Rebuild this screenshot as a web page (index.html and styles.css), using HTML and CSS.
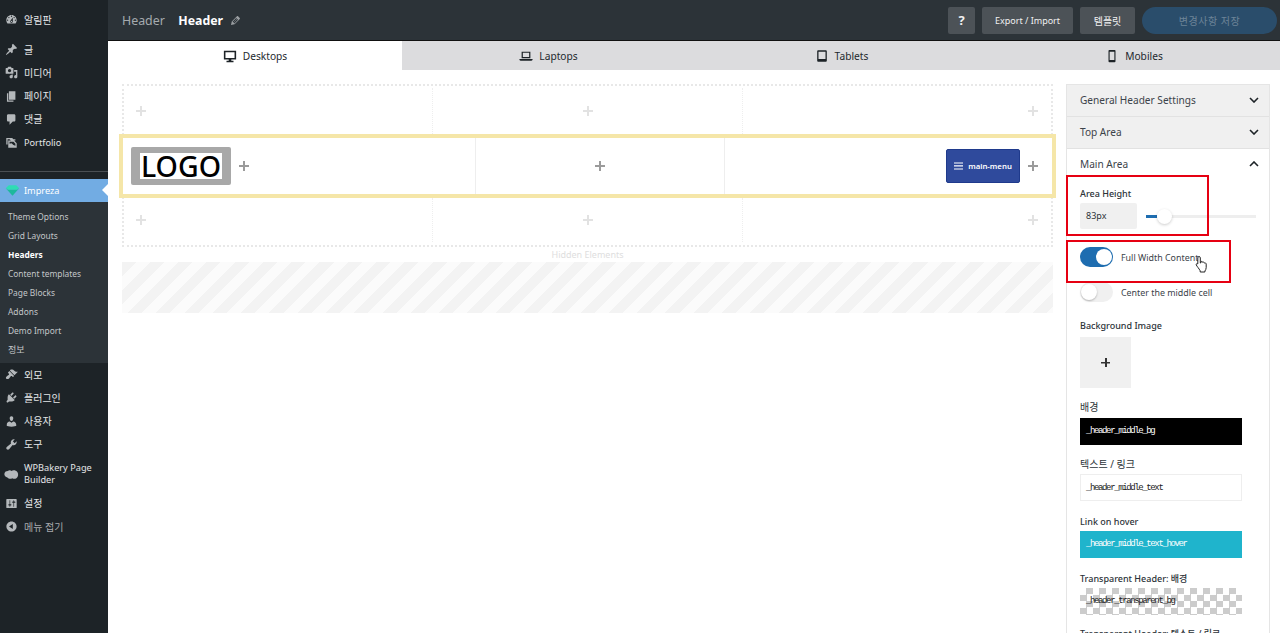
FILE: index.html
```html
<!DOCTYPE html>
<html lang="ko">
<head>
<meta charset="utf-8">
<title>Header</title>
<link rel="stylesheet" href="styles.css">
</head>
<body>
<div class="app">
  <nav class="side">
    <a class="item first"><svg class="ic" viewBox="0 0 20 20"><path d="M3.76 16h12.48c1.1-1.37 1.76-3.11 1.76-5 0-4.42-3.58-8-8-8s-8 3.58-8 8c0 1.89.66 3.63 1.76 5zM10 4c.55 0 1 .45 1 1s-.45 1-1 1-1-.45-1-1 .45-1 1-1zM6 6c.55 0 1 .45 1 1s-.45 1-1 1-1-.45-1-1 .45-1 1-1zm8 0c.55 0 1 .45 1 1s-.45 1-1 1-1-.45-1-1 .45-1 1-1zm-5.37 5.55L12 7v6c0 1.1-.9 2-2 2s-2-.9-2-2c0-.57.24-1.08.63-1.45zM4 10c.55 0 1 .45 1 1s-.45 1-1 1-1-.45-1-1 .45-1 1-1zm12 0c.55 0 1 .45 1 1s-.45 1-1 1-1-.45-1-1 .45-1 1-1zm-5 3c0-.55-.45-1-1-1s-1 .45-1 1 .45 1 1 1 1-.45 1-1z"/></svg>알림판</a>
    <div class="gap"></div>
    <a class="item"><svg class="ic" viewBox="0 0 20 20"><path d="M10.44 3.02l1.82-1.82 6.36 6.35-1.83 1.82c-1.05-.68-2.48-.57-3.41.36l-.75.75c-.92.93-1.04 2.35-.35 3.41l-1.83 1.82-2.41-2.41-2.8 2.79c-.42.42-3.38 2.71-3.8 2.29s1.86-3.39 2.28-3.81l2.79-2.79L4.1 9.36l1.83-1.82c1.05.69 2.48.57 3.4-.36l.75-.75c.93-.92 1.05-2.35.36-3.41z"/></svg>글</a>
    <a class="item"><svg class="ic" viewBox="0 0 20 20"><path d="M13 11V4c0-.55-.45-1-1-1h-1.67L9 1H5L3.67 3H2c-.55 0-1 .45-1 1v7c0 .55.45 1 1 1h10c.55 0 1-.45 1-1zM7 4.5c1.38 0 2.5 1.12 2.5 2.5S8.38 9.5 7 9.5 4.5 8.38 4.5 7 5.62 4.5 7 4.5zM14 6h5v10.5c0 1.38-1.12 2.5-2.5 2.5S14 17.88 14 16.5s1.12-2.5 2.5-2.5c.17 0 .34.02.5.05V9h-3V6zm-4 8.05V13h2v3.5c0 1.38-1.12 2.5-2.5 2.5S7 17.88 7 16.5 8.12 14 9.5 14c.17 0 .34.02.5.05z"/></svg>미디어</a>
    <a class="item"><svg class="ic" viewBox="0 0 20 20"><path d="M6 15V2h10v13H6zm-1 1h8v2H3V5h2v11z"/></svg>페이지</a>
    <a class="item"><svg class="ic" viewBox="0 0 20 20"><path d="M5 2h9c1.1 0 2 .9 2 2v7c0 1.1-.9 2-2 2h-2l-5 5v-5H5c-1.1 0-2-.9-2-2V4c0-1.1.9-2 2-2z"/></svg>댓글</a>
    <a class="item en"><svg class="ic" viewBox="0 0 20 20"><path d="M2 3h9l2 2h3v2H9L7 5H4v8H2zM5 7h9l4 4v7H5zm2 2v3l3-1 3 3 3 1v-3l-3-3z"/></svg>Portfolio</a>
    <div class="sep"></div>
    <a class="item active en"><svg class="gem" viewBox="0 0 20 16"><path class="gem-top" d="M1 5l4-4h10l4 4-3 2H4z"/><path class="gem-low" d="M1 5l3 2h12l3-2-9 10z"/></svg>Impreza</a>
    <div class="sub">
      <a>Theme Options</a>
      <a>Grid Layouts</a>
      <a class="cur">Headers</a>
      <a>Content templates</a>
      <a>Page Blocks</a>
      <a>Addons</a>
      <a>Demo Import</a>
      <a class="ko">정보</a>
    </div>
    <a class="item"><svg class="ic" viewBox="0 0 20 20"><path d="M14.48 11.06L7.41 3.99l1.5-1.5c.5-.56 2.3-.47 3.51.32 1.21.8 1.43 1.28 2.91 2.1 1.18.64 2.45 1.26 4.45.85zm-.71.71L6.7 4.7 4.93 6.47c-.39.39-.39 1.02 0 1.41l1.06 1.06c.39.39.39 1.03 0 1.42-.6.6-1.43 1.11-2.21 1.69-.35.26-.7.53-1.01.84C1.43 13.23.9 15.38 2.01 16.49c1.1 1.1 3.25.58 4.62-.78.31-.31.58-.66.84-1.01.58-.78 1.09-1.61 1.69-2.21.39-.39 1.03-.39 1.42 0l1.06 1.06c.39.39 1.02.39 1.41 0z"/></svg>외모</a>
    <a class="item"><svg class="ic" viewBox="0 0 20 20"><path d="M13.11 4.36L9.87 7.6 8 5.73l3.24-3.24c.35-.34 1.05-.2 1.56.32.52.51.66 1.21.31 1.55zm-8 1.77l.91-1.12 9.01 9.01-1.19.84c-.71.71-2.63 1.16-3.82 1.16H6.14L4.9 17.26c-.59.59-1.54.59-2.12 0-.59-.58-.59-1.53 0-2.12l1.24-1.24v-3.88c0-1.13.4-3.19 1.09-3.89zm7.26 3.97l3.24-3.24c.34-.35 1.04-.21 1.55.31.52.51.66 1.21.31 1.55l-3.24 3.25z"/></svg>플러그인</a>
    <a class="item"><svg class="ic" viewBox="0 0 20 20"><path d="M10 9.25c-2.27 0-2.73-3.44-2.73-3.44C7 4.02 7.82 2 9.97 2c2.16 0 2.98 2.02 2.71 3.81 0 0-.41 3.44-2.68 3.44zm0 2.57L12.72 10c2.39 0 4.52 2.33 4.52 4.53v2.49s-3.65 1.13-7.24 1.13c-3.65 0-7.24-1.13-7.24-1.13v-2.49c0-2.25 1.94-4.48 4.47-4.48z"/></svg>사용자</a>
    <a class="item"><svg class="ic" viewBox="0 0 20 20"><path d="M16.68 9.77c-1.34 1.34-3.3 1.67-4.95.99l-5.41 6.52c-.99.99-2.59.99-3.58 0s-.99-2.59 0-3.57l6.52-5.42c-.68-1.65-.35-3.61.99-4.95 1.28-1.28 3.12-1.62 4.72-1.06l-2.89 2.89 2.82 2.82 2.86-2.87c.53 1.58.18 3.39-1.08 4.65z"/></svg>도구</a>
    <a class="item tall en"><svg class="ic cloud" viewBox="0 0 20 20"><path d="M5 4c2-1.5 4-1 5 0 2-1.5 6-1 8 1.5 1.5 2.5 1 6.5-1.5 8-2 1.5-4 1-5.5 0-2 1.5-5 1-6.5-1C2.5 12 0 10 .5 7.5 1 5 3 4 5 4z"/></svg>WPBakery Page Builder</a>
    <a class="item"><svg class="ic" viewBox="0 0 20 20"><path d="M18 16V4c0-.55-.45-1-1-1H3c-.55 0-1 .45-1 1v12c0 .55.45 1 1 1h14c.55 0 1-.45 1-1zM8 11h1c.55 0 1 .45 1 1s-.45 1-1 1H8v1.5c0 .28-.22.5-.5.5s-.5-.22-.5-.5V13H6c-.55 0-1-.45-1-1s.45-1 1-1h1V5.5c0-.28.22-.5.5-.5s.5.22.5.5V11zm5-2h-1c-.55 0-1-.45-1-1s.45-1 1-1h1V5.5c0-.28.22-.5.5-.5s.5.22.5.5V7h1c.55 0 1 .45 1 1s-.45 1-1 1h-1v5.5c0 .28-.22.5-.5.5s-.5-.22-.5-.5V9z"/></svg>설정</a>
    <a class="item dim"><svg class="ic" viewBox="0 0 20 20"><path d="M10 2.16c4.33 0 7.84 3.51 7.84 7.84s-3.51 7.84-7.84 7.84S2.16 14.33 2.16 10 5.71 2.16 10 2.16zm2 11.72V6.12L6.18 9.97z"/></svg>메뉴 접기</a>
  </nav>

  <div class="main">
    <header class="top">
      <span class="crumb">Header</span>
      <span class="title">Header</span>
      <svg class="pencil" viewBox="0 0 20 20"><path d="M13.89 3.39l2.71 2.72c.46.46.42 1.24.03 1.64l-8.01 8.02-5.56 1.16 1.16-5.58 8.01-8c.4-.39 1.2-.43 1.66.04zM11.16 6.18l-5.59 5.61 1.11 1.11 5.54-5.65zm2.74 2.77L12.79 7.84l-5.6 5.61 1.11 1.11z"/></svg>
      <span class="spring"></span>
      <button class="btn help">?</button>
      <button class="btn export">Export / Import</button>
      <button class="btn tpl">템플릿</button>
      <button class="save">변경사항 저장</button>
    </header>

    <div class="tabs">
      <div class="tab on"><svg class="tic" viewBox="0 0 16 16"><path d="M1 2h14v10H9.5v1.5H12V15H4v-1.5h2.5V12H1zm1.8 1.8v6.4h10.4V3.8z"/></svg>Desktops</div>
      <div class="tab"><svg class="tic" viewBox="0 0 16 16"><path d="M3 3h10v7.5H3zm1.4 1.4v4.7h7.2V4.4zM.5 11.5h15v.5c0 .8-.6 1.3-1.3 1.3H1.8C1.1 13.3.5 12.8.5 12z"/></svg>Laptops</div>
      <div class="tab"><svg class="tic" viewBox="0 0 16 16"><path d="M3.5 1.5h9c.6 0 1 .4 1 1v11c0 .6-.4 1-1 1h-9c-.6 0-1-.4-1-1v-11c0-.6.4-1 1-1zM4 3v8.5h8V3z"/></svg>Tablets</div>
      <div class="tab"><svg class="tic" viewBox="0 0 16 16"><path d="M5 1h6c.6 0 1 .4 1 1v12c0 .6-.4 1-1 1H5c-.6 0-1-.4-1-1V2c0-.6.4-1 1-1zm.3 2v9.5h5.4V3z"/></svg>Mobiles</div>
    </div>

    <div class="work">
      <section class="canvas">
        <div class="rows">
          <div class="row outer high"><div class="cell"><i class="plus"></i></div><div class="cell mid"><i class="plus"></i></div><div class="cell end"><i class="plus"></i></div></div>
          <div class="row focus">
            <div class="cell"><div class="logo"><span>LOGO</span></div><i class="plus dark"></i></div>
            <div class="cell mid"><i class="plus dark"></i></div>
            <div class="cell end"><div class="menu"><svg class="burger" viewBox="0 0 10 8"><path d="M0 0h10v1.3H0zM0 3.3h10v1.3H0zM0 6.7h10V8H0z"/></svg>main-menu</div><i class="plus dark"></i></div>
          </div>
          <div class="row outer low"><div class="cell"><i class="plus"></i></div><div class="cell mid"><i class="plus"></i></div><div class="cell end"><i class="plus"></i></div></div>
        </div>
        <div class="hidden-label">Hidden Elements</div>
        <div class="stripes"></div>
      </section>

      <aside class="panel">
        <div class="acc"><span>General Header Settings</span><svg class="chev" viewBox="0 0 10 6"><path d="M1 1l4 4 4-4"/></svg></div>
        <div class="acc"><span>Top Area</span><svg class="chev" viewBox="0 0 10 6"><path d="M1 1l4 4 4-4"/></svg></div>
        <div class="acc open"><span>Main Area</span><svg class="chev" viewBox="0 0 10 6"><path d="M1 5l4-4 4 4"/></svg></div>
        <div class="body">
          <label class="lab first">Area Height</label>
          <div class="slide"><div class="val">83px</div><div class="track"><i class="fill"></i><i class="thumb"></i></div></div>
          <div class="sw on"><i class="knob"></i><span>Full Width Content</span></div>
          <div class="sw"><i class="knob"></i><span>Center the middle cell</span></div>
          <label class="lab bg">Background Image</label>
          <div class="upload"></div>
          <label class="lab ko">배경</label>
          <div class="color black">_header_middle_bg</div>
          <label class="lab ko">텍스트 / 링크</label>
          <div class="color white">_header_middle_text</div>
          <label class="lab drop">Link on hover</label>
          <div class="color teal">_header_middle_text_hover</div>
          <label class="lab drop">Transparent Header: 배경</label>
          <div class="color check">_header_transparent_bg</div>
          <label class="lab">Transparent Header: 텍스트 / 링크</label>
        </div>
      </aside>
    </div>
  </div>
</div>
<div class="mark m1"></div>
<div class="mark m2"></div>
<svg class="hand" viewBox="0 0 14 18"><path d="M4 1.5c.8 0 1.3.6 1.3 1.3V8l.7-.2V6.6c.9-.5 1.600 0 1.700.7.900-.5 1.700 0 1.800.8.900-.4 1.700.1 1.700 1v3.500c0 1.500-.7 2.500-1.300 3.400v1H5.200v-1.200C4 13.500 2 11.500 1.300 10c-.4-1 .5-1.800 1.400-1.200l.1.100V2.800c0-.7.500-1.300 1.200-1.300z"/></svg>
</body>
</html>
```

FILE: styles.css
```css
* { box-sizing: border-box; }
html, body { margin: 0; height: 633px; overflow: hidden; background: #fff; }
body { font-family: "Noto Sans", "Noto Sans CJK KR", sans-serif; color: #2c3338; }
.app { display: flex; height: 633px; }

.side { width: 108px; flex: none; background: #1d2327; padding-top: 8px; display: flex; flex-direction: column; }
.item { height: 23.2px; display: flex; align-items: center; padding-left: 24px; position: relative; font-size: 10px; color: #e4e6e7; line-height: 12px; }
.item.en { font-size: 9.2px; }
.item .ic { position: absolute; left: 5px; top: 5px; width: 13px; height: 13px; fill: #b4b8bb; }
.gap { height: 7px; }
.sep { height: 1px; background: #4a4f53; margin-top: 17px; margin-bottom: 7px; }
.item.active { height: 23px; background: #72ace3; color: #fff; }
.item.active::after { content: ""; position: absolute; right: 0; top: 5px; border: 6px solid transparent; border-right-color: #fff; border-left-width: 0; }
.gem { position: absolute; left: 5px; top: 5px; width: 15px; height: 13px; }
.gem-top { fill: #2fdcb4; }
.gem-low { fill: #1fb89c; }
.sub { background: #2c3338; padding: 5px 0 4px; display: flex; flex-direction: column; }
.sub a { height: 19px; line-height: 19px; padding-left: 8px; font-size: 8.4px; color: #c3c6c8; }
.sub a.ko { font-size: 9px; }
.sub a.cur { color: #fff; font-weight: 700; }
.item.tall { height: 36px; padding-right: 6px; }
.item.tall .ic { top: 12px; left: 4px; width: 15px; height: 15px; }
.item.dim { color: #a7aaad; }

.main { flex: 1; min-width: 0; display: flex; flex-direction: column; }
.top { height: 41px; flex: none; background: #2c3338; border-bottom: 1px solid #111; display: flex; align-items: center; padding: 0 3px 0 14px; }
.crumb { font-size: 12.4px; color: #a5aaae; }
.title { font-size: 12.3px; font-weight: 700; color: #fff; margin-left: 13.5px; }
.pencil { width: 13px; height: 13px; fill: #9a9ea1; margin-left: 6px; }
.spring { flex: 1; }
.btn { height: 27px; border: 0; border-radius: 2px; background: #4c5257; color: #f0f0f1; font-family: inherit; font-size: 9px; padding: 0; margin-left: 7px; }
.help { width: 27px; font-size: 13px; font-weight: 700; }
.export { width: 91px; }
.tpl { width: 55px; font-size: 10px; }
.save { width: 135px; height: 27px; margin-left: 7px; border: 0; border-radius: 14px; background: #2a4d6b; color: #6d8498; font-family: inherit; font-size: 10px; letter-spacing: .5px; padding: 0; }

.tabs { height: 29px; flex: none; display: grid; grid-template-columns: 294px 293px 293px 292px; background: #dcdcde; }
.tab { display: flex; align-items: center; justify-content: center; font-size: 10.2px; color: #23282d; }
.tab.on { background: #fff; }
.tic { width: 14px; height: 14px; fill: #1d2327; margin-right: 6px; }

.work { flex: 1; min-height: 0; display: flex; padding: 14px 10px 0 14px; }
.canvas { width: 931px; flex: none; }
.rows { border: 2px dotted #e8e8e8; height: 163px; }
.row { display: grid; grid-template-columns: 309px 310px 1fr; align-items: stretch; }
.outer { height: 48px; }
.high { padding-top: 2px; }
.low { height: 48px; padding-bottom: 4px; }
.cell { display: flex; align-items: center; justify-content: flex-start; padding-left: 12px; border-right: 1px dotted #eee; }
.cell.mid { justify-content: center; padding-left: 0; }
.cell.end { justify-content: flex-end; padding: 0 13px 0 0; border-right: 0; }
.focus { grid-template-columns: 353px 249px 1fr; height: 64px; margin: 0 -5px; border: 4px solid #f5e6a8; background: #fff; position: relative; }
.focus .cell { padding-left: 8px; border-right: 1px solid #eee; }
.focus .cell.mid { padding-left: 0; }
.focus .cell.end { border-right: 0; padding: 0 14px 0 0; }
.plus { display: block; width: 10px; height: 10px; flex: none; background: linear-gradient(#e2e2e2, #e2e2e2) center / 10px 2px no-repeat, linear-gradient(#e2e2e2, #e2e2e2) center / 2px 10px no-repeat; }
.plus.dark { background: linear-gradient(#9b9b9b, #9b9b9b) center / 10px 2px no-repeat, linear-gradient(#9b9b9b, #9b9b9b) center / 2px 10px no-repeat; }
.logo { width: 100px; height: 38px; background: #a8a8a8; border-radius: 2px; display: flex; align-items: center; justify-content: center; margin-right: 8px; }
.logo span { background: #fff; color: #000; font-size: 28.5px; line-height: 26px; font-weight: 500; padding: 0 1px; }
.menu { width: 74px; height: 34px; background: #2f4a9c; border: 1px solid #1f3a8c; border-radius: 2px; color: #fff; font-size: 7.8px; font-weight: 600; display: flex; align-items: center; justify-content: center; margin-right: 8px; }
.burger { width: 9px; height: 8px; fill: #fff; margin-right: 5px; }
.hidden-label { height: 15px; line-height: 15px; text-align: center; font-size: 9px; color: #dedede; }
.stripes { height: 51px; background: repeating-linear-gradient(135deg, #f3f3f3 0 10px, #fbfbfb 10px 20px); }

.panel { width: 204px; margin-left: 13px; flex: none; border: 1px solid #e5e5e5; border-bottom: 0; }
.acc { height: 32px; background: #f0f0f0; border-bottom: 1px solid #e2e2e2; display: flex; align-items: center; justify-content: space-between; padding: 0 10px 2px 13px; font-size: 10.1px; color: #3c434a; }
.acc.open { background: #fff; border-bottom: 0; }
.chev { width: 10px; height: 6px; fill: none; stroke: #1d2327; stroke-width: 1.6; }
.body { padding: 0 13px; }
.lab { display: block; font-size: 9px; line-height: 14px; color: #2c3338; font-weight: 500; margin-top: 12px; }
.lab.ko { font-weight: 400; font-size: 10px; }
.lab.first { margin-top: 6px; }
.lab.bg { margin-top: 17px; }
.lab.drop { margin-top: 14px; margin-bottom: -2px; }
.slide { display: flex; align-items: center; margin-top: 2px; }
.val { width: 57px; height: 26px; background: #f0f0f0; border-radius: 2px; font-size: 9px; line-height: 26px; padding-left: 6px; }
.track { width: 110px; height: 3px; margin-left: 9px; background: #eee; position: relative; }
.fill { position: absolute; left: 0; top: 0; width: 11px; height: 3px; background: #1e6db0; }
.thumb { position: absolute; left: 11px; top: -6px; width: 15px; height: 15px; border-radius: 50%; background: #fff; box-shadow: 0 1px 3px rgba(0,0,0,.2); }
.sw { display: flex; align-items: center; margin-top: 18px; height: 20px; font-size: 8.9px; color: #3c434a; position: relative; }
.sw + .sw { margin-top: 15px; }
.sw::before { content: ""; width: 33px; height: 20px; border-radius: 10px; background: #f0f0f0; margin-right: 8px; }
.sw.on::before { background: #1e6db0; }
.knob { position: absolute; left: 1px; top: 2px; width: 16px; height: 16px; border-radius: 50%; background: #fff; box-shadow: 0 1px 2px rgba(0,0,0,.25); }
.sw.on .knob { left: 16px; box-shadow: none; }
.upload { width: 51px; height: 51px; margin-top: 4px; background: #f0f0f0 linear-gradient(#333, #333) center / 9px 1.5px no-repeat; position: relative; }
.upload::after { content: ""; position: absolute; left: 25px; top: 21px; width: 1.5px; height: 9px; background: #333; }
.color { width: 162px; height: 27px; margin-top: 3.67px; font-family: "Liberation Mono", monospace; font-size: 9px; letter-spacing: -1.38px; line-height: 27px; padding-left: 6px; color: #222; }
.black { background: #000; color: #fff; }
.white { background: #fff; border: 1px solid #eee; padding-left: 5px; line-height: 26px; }
.teal { background: #1fb4cc; color: #fff; }
.check { background: conic-gradient(#ccc 25%, #fff 0 50%, #ccc 0 75%, #fff 0) 0 0 / 13px 13px; }

.mark { position: absolute; border: 2px solid #e60012; }
.m1 { left: 1066px; top: 175px; width: 143px; height: 61px; }
.m2 { left: 1066px; top: 240px; width: 165px; height: 43px; }
.hand { position: absolute; left: 1195px; top: 255px; width: 14px; height: 18px; fill: #fff; stroke: #222; stroke-width: 1; }
```
